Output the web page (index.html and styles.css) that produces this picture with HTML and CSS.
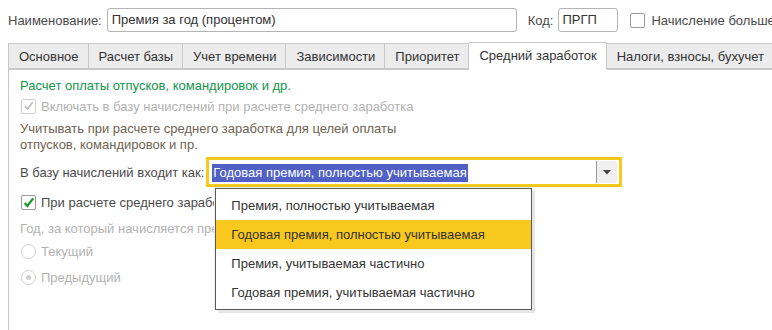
FILE: index.html
```html
<!DOCTYPE html>
<html lang="ru">
<head>
    <meta charset="UTF-8">
    <title>Премия за год (процентом)</title>
    <link rel="stylesheet" href="styles.css">
</head>
<body>
    <div class="form">
        <div class="header-row">
            <span class="label">Наименование:</span>
            <div class="input name-input">Премия за год (процентом)</div>
            <span class="label code-label">Код:</span>
            <div class="input code-input">ПРГП</div>
            <span class="check-box"></span>
            <span class="label">Начисление больше не используется</span>
        </div>

        <div class="tabs">
            <div class="tab">Основное</div>
            <div class="tab">Расчет базы</div>
            <div class="tab">Учет времени</div>
            <div class="tab">Зависимости</div>
            <div class="tab">Приоритет</div>
            <div class="tab active">Средний заработок</div>
            <div class="tab">Налоги, взносы, бухучет</div>
        </div>

        <div class="panel">
            <div class="group-title">Расчет оплаты отпусков, командировок и др.</div>
            <div class="row disabled">
                <span class="check-box checked muted">
                    <svg viewBox="0 0 14 14" width="14" height="14"><path d="M3 7.2 L6 10.2 L11.5 2.8" fill="none" stroke="#c4c4c4" stroke-width="2"/></svg>
                </span>
                <span>Включать в базу начислений при расчете среднего заработка</span>
            </div>
            <div class="note">Учитывать при расчете среднего заработка для целей оплаты<br>отпусков, командировок и пр.</div>

            <div class="row combo-row">
                <span class="label">В базу начислений входит как:</span>
                <div class="combo">
                    <div class="combo-field"><span class="selected-text">Годовая премия, полностью учитываемая</span></div>
                    <div class="combo-button">
                        <svg viewBox="0 0 8 5" width="8" height="5"><path d="M0 0 H8 L4 4.5 Z" fill="#444"/></svg>
                    </div>
                    <ul class="dropdown">
                        <li>Премия, полностью учитываемая</li>
                        <li class="current">Годовая премия, полностью учитываемая</li>
                        <li>Премия, учитываемая частично</li>
                        <li>Годовая премия, учитываемая частично</li>
                    </ul>
                </div>
            </div>

            <div class="row premium-row">
                <span class="check-box checked">
                    <svg viewBox="0 0 14 14" width="14" height="14"><path d="M2.8 7 L5.8 10.2 L12 2" fill="none" stroke="#1b9a2e" stroke-width="2.4"/></svg>
                </span>
                <span class="label">При расчете среднего заработка учитывать премию за предыдущий год</span>
            </div>
            <div class="muted-label">Год, за который начисляется премия:</div>
            <div class="row radio-row disabled">
                <span class="radio"></span>
                <span>Текущий</span>
            </div>
            <div class="row radio-row disabled">
                <span class="radio on"></span>
                <span>Предыдущий</span>
            </div>
        </div>
    </div>
</body>
</html>
```

FILE: styles.css
```css
body {
    margin: 0;
    background: #fff;
    font-family: "Liberation Sans", Arial, sans-serif;
    font-size: 13px;
    color: #4a4a4a;
    overflow: hidden;
    width: 772px;
    height: 330px;
}

.form {
    padding: 8px 0 0 8px;
    white-space: nowrap;
}

.header-row {
    display: flex;
    align-items: center;
    height: 24px;
}

.header-row > * {
    flex: none;
}

.label {
    color: #4a4a4a;
}

.input {
    box-sizing: border-box;
    height: 24px;
    line-height: 22px;
    border: 1px solid #b4b4b4;
    border-radius: 3px;
    padding: 0 4px;
    color: #333;
    background: #fff;
}

.name-input {
    width: 410px;
    margin-left: 5px;
}

.code-label {
    margin-left: 11px;
}

.code-input {
    width: 60px;
    margin-left: 5px;
    padding-left: 3px;
}

.check-box {
    box-sizing: border-box;
    display: inline-flex;
    align-items: center;
    justify-content: center;
    width: 15px;
    height: 15px;
    border: 1px solid #9a9a9a;
    border-radius: 2px;
    background: #fff;
    margin: 0 6px 0 12px;
    flex: none;
}

.check-box svg {
    display: block;
}

.check-box.muted {
    border-color: #d0d0d0;
}

.tabs {
    display: flex;
    align-items: flex-end;
    margin-top: 10px;
    height: 27px;
}

.tab {
    flex: none;
    box-sizing: border-box;
    height: 26px;
    line-height: 25px;
    padding: 0 9px 0 10px;
    background: #ececec;
    border: 1px solid #c9c9c9;
    border-left: none;
    color: #333;
}

.tab:first-child {
    border-left: 1px solid #c9c9c9;
}

.tab.active {
    height: 28px;
    background: #fff;
    border-bottom-color: #fff;
    position: relative;
    top: 1px;
}

.panel {
    border-left: 1px solid #c9c9c9;
    border-top: 1px solid #c9c9c9;
    height: 252px;
    padding: 8px 0 0 11px;
}

.group-title {
    color: #12964a;
    line-height: 16px;
}

.row {
    display: flex;
    align-items: center;
}

.row .check-box {
    margin: 0 5px 0 1px;
}

.disabled {
    color: #b2b2b2;
    height: 20px;
    margin-top: 2px;
}

.note {
    color: #6d6352;
    line-height: 16px;
    margin-top: 5px;
}

.combo-row {
    margin-top: 4px;
}

.combo {
    position: relative;
    box-sizing: border-box;
    width: 416px;
    height: 30px;
    margin-left: 2px;
    border: 3px solid #f8c81c;
    display: flex;
    align-items: center;
    padding: 0 2px 0 3px;
}

.combo-field {
    flex: 1;
}

.selected-text {
    background: #5060c4;
    color: #fff;
    padding: 1px 1px 2px 1px;
}

.combo-button {
    box-sizing: border-box;
    width: 21px;
    height: 22px;
    background: #f0f0f0;
    border-left: 1px solid #9a9a9a;
    display: flex;
    align-items: center;
    justify-content: center;
}

.dropdown {
    position: absolute;
    left: 6px;
    top: 28px;
    width: 317px;
    box-sizing: border-box;
    margin: 0;
    padding: 2px 0;
    list-style: none;
    background: #fff;
    border: 1px solid #5a5a5a;
    box-shadow: 3px 3px 0 #e6e6e6, -1px -1px 0 #eeeeee;
    z-index: 2;
}

.dropdown li {
    height: 29px;
    line-height: 29px;
    padding-left: 15px;
    color: #333;
}

.dropdown li.current {
    background: #f9c81e;
}

.premium-row {
    margin-top: 8px;
}

.muted-label {
    color: #b2b2b2;
    margin-top: 11px;
    line-height: 16px;
}

.radio-row {
    height: 24px;
    margin-top: 2px;
}

.radio {
    box-sizing: border-box;
    width: 15px;
    height: 15px;
    border: 1px solid #cfcfcf;
    border-radius: 50%;
    margin-right: 5px;
    margin-left: 1px;
    display: flex;
    align-items: center;
    justify-content: center;
}

.radio.on::after {
    content: "";
    width: 5px;
    height: 5px;
    border-radius: 50%;
    background: #cfcfcf;
}
```
